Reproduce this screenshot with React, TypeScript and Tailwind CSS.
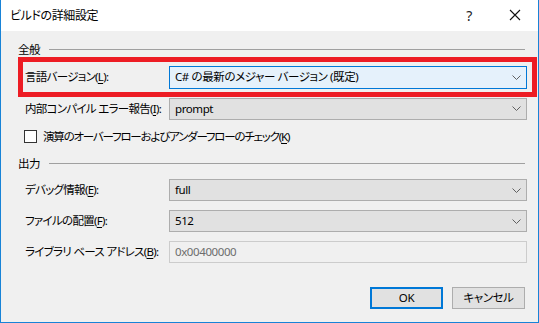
import React from 'react';

const font = "font-['Noto_Sans','Noto_Sans_CJK_JP',sans-serif] [font-feature-settings:'palt'] tracking-[-0.4px]";

function Chevron() {
  return (
    <svg width="9" height="5" viewBox="0 0 9 5" className="shrink-0">
      <path d="M0.5 0.5 L4.5 4.5 L8.5 0.5" fill="none" stroke="#606060" strokeWidth="1" />
    </svg>
  );
}

function Combo({ value, active }: { value: string; active?: boolean }) {
  return (
    <div
      className={
        active
          ? 'w-[358px] h-[23px] shrink-0 flex items-center justify-between pl-[5px] pr-[5px] border border-[#0078d7] bg-[#e5f1fb]'
          : 'w-[358px] h-[22px] shrink-0 flex items-center justify-between pl-[5px] pr-[5px] border border-[#adadad] bg-[#e1e1e1]'
      }
    >
      <span className="whitespace-nowrap">{value}</span>
      <Chevron />
    </div>
  );
}

function Label({ text, accel }: { text: string; accel: string }) {
  return (
    <div className="w-[144px] shrink-0 whitespace-nowrap tracking-[-0.7px]">
      {text}(<span className="underline underline-offset-2">{accel}</span>):
    </div>
  );
}

function Heading({ text }: { text: string }) {
  return (
    <div className="h-[15px] flex items-center pr-[12px]">
      <span>{text}</span>
      <div className="flex-1 h-px bg-[#a0a0a0] ml-[9px]" />
    </div>
  );
}

export default function App() {
  return (
    <div className={`w-[539px] h-[323px] flex flex-col border-x border-b border-[#1883d7] text-[11.5px] leading-none text-black ${font}`}>
      {/* title bar */}
      <div className="h-[31px] shrink-0 bg-white flex items-center pl-[9px]">
        <span className="flex-1 text-[12px]">ビルドの詳細設定</span>
        <span className="w-[46px] text-center text-[14px] text-[#222]">?</span>
        <svg width="46" height="31" viewBox="0 0 46 31">
          <path d="M18 10 L28 20 M28 10 L18 20" stroke="#111" strokeWidth="1.1" />
        </svg>
      </div>

      <div className="flex-1 bg-[#f0f0f0] pt-[11px] pl-[17px] pr-px">
        <Heading text="全般" />

        <div className="h-[40px] border-[5px] border-[#ed1c24] flex items-center pl-[2px]">
          <Label text="言語バージョン" accel="L" />
          <Combo value="C# の最新のメジャー バージョン (既定)" active />
        </div>

        <div className="h-[23px] flex items-center pl-[7px]">
          <Label text="内部コンパイル エラー報告" accel="I" />
          <Combo value="prompt" />
        </div>

        <div className="mt-[10px] h-[13px] flex items-center pl-[6px]">
          <div className="w-[13px] h-[13px] border border-[#333] bg-white" />
          <span className="ml-[6px] whitespace-nowrap tracking-[-1.2px]">
            演算のオーバーフローおよびアンダーフローのチェック(<span className="underline underline-offset-2">K</span>)
          </span>
        </div>

        <div className="mt-[13px]">
          <Heading text="出力" />
        </div>

        <div className="mt-[8px] flex flex-col gap-[9px] pl-[7px]">
          <div className="h-[22px] flex items-center">
            <Label text="デバッグ情報" accel="E" />
            <Combo value="full" />
          </div>
          <div className="h-[22px] flex items-center">
            <Label text="ファイルの配置" accel="F" />
            <Combo value="512" />
          </div>
          <div className="h-[22px] flex items-center">
            <Label text="ライブラリ ベース アドレス" accel="B" />
            <div className="w-[358px] h-[22px] shrink-0 flex items-center pl-[5px] border border-[#cccccc] bg-[#f0f0f0] text-[#6d6d6d]">
              0x00400000
            </div>
          </div>
        </div>

        <div className="mt-[24px] flex justify-end gap-[9px] pr-[12px]">
          <div className="w-[73px] h-[22px] flex items-center justify-center border-2 border-[#0078d7] bg-[#e1e1e1]">OK</div>
          <div className="w-[73px] h-[22px] flex items-center justify-center border border-[#adadad] bg-[#e1e1e1]">キャンセル</div>
        </div>
      </div>
    </div>
  );
}
